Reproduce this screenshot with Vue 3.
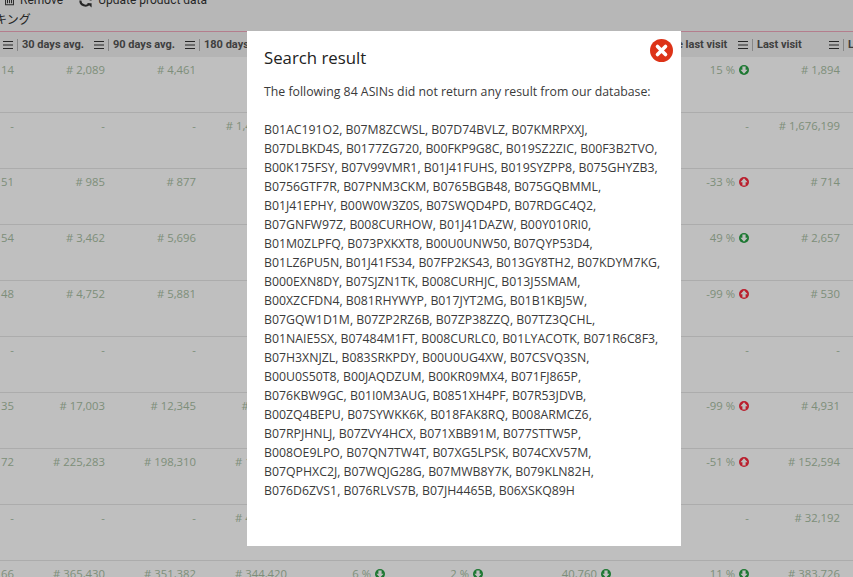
<template>
  <div class="page">
    <div class="toolbar">
      <div class="actions">
        <span class="action">
          <svg class="tool-icon" viewBox="0 0 14 14"><path d="M2 1h10v12H2zM4.500 3v8M7 3v8M9.500 3v8" fill="none" stroke="#333" stroke-width="1.300" /></svg>
          Remove
        </span>
        <span class="action refresh">
          <svg class="tool-icon wide" viewBox="0 0 16 16"><path d="M2.500 8a5.500 5.500 0 0 0 9.800 3.400M13.500 8A5.500 5.500 0 0 0 3.700 4.600" fill="none" stroke="#333" stroke-width="2.200" /><path d="M9.500 11h5v4.500zM6.500 5h-5V.5z" fill="#333" /></svg>
          Update product data
        </span>
      </div>
      <div class="tab">ランキング</div>
    </div>

    <div class="table">
      <div class="row head">
        <div v-for="(title, i) in columns" :key="i" class="head-cell">
          <span class="head-title">{{ title }}</span>
          <svg class="menu" viewBox="0 0 10 8"><path d="M0 .5h10M0 4h10M0 7.500h10" stroke="#333" stroke-width="1" /></svg>
          <span class="sep"></span>
        </div>
      </div>
      <div v-for="(row, i) in rows" :key="i" class="row body">
        <div v-for="(cell, j) in row" :key="j" class="cell">
          <template v-if="typeof cell === 'string'">{{ cell }}</template>
          <template v-else>
            {{ cell.t }}
            <svg class="trend" viewBox="0 0 10 10">
              <circle cx="5" cy="5" r="5" :fill="cell.up ? '#f8283c' : '#27a043'" />
              <path v-if="cell.up" d="M5 1.300 8.600 5.200H6.600V8.400H3.400V5.200H1.400z" fill="#fff" />
              <path v-else d="M5 8.700 1.400 4.800H3.400V1.600H6.600V4.800H8.600z" fill="#fff" />
            </svg>
          </template>
        </div>
      </div>
    </div>

    <div class="backdrop"></div>

    <div class="modal">
      <h2 class="title">Search result</h2>
      <svg class="close" viewBox="0 0 23 23">
        <circle cx="11.500" cy="11.500" r="11.500" fill="#dd3318" />
        <path d="M7.500 7.500l8 8M15.500 7.500l-8 8" stroke="#fff" stroke-width="3.600" stroke-linecap="round" />
      </svg>
      <p class="intro">The following 84 ASINs did not return any result from our database:</p>
      <div class="asins">
        <div v-for="line in asinLines" :key="line">{{ line }}</div>
      </div>
    </div>
  </div>
</template>

<script setup>
// middle columns sit behind the modal, only what shows round it is filled in
const columns = ['', '30 days avg.', '90 days avg.', '180 days avg.', '', '', '', 'Rank change last visit', 'Last visit', 'Last update']

const up = (t) => ({ t, up: true })
const down = (t) => ({ t, up: false })

const rows = [
  ['14', '# 2,089', '# 4,461', '', '', '', '', down('15 %'), '# 1,894'],
  ['-', '-', '-', '# 1,456,789', '', '', '', '-', '# 1,676,199'],
  ['51', '# 985', '# 877', '', '', '', '', up('-33 %'), '# 714'],
  ['54', '# 3,462', '# 5,696', '', '', '', '', down('49 %'), '# 2,657'],
  ['48', '# 4,752', '# 5,881', '', '', '', '', up('-99 %'), '# 530'],
  ['-', '-', '-', '', '', '', '', '-', '-'],
  ['35', '# 17,003', '# 12,345', '# 13,210', '', '', '', up('-99 %'), '# 4,931'],
  ['72', '# 225,283', '# 198,310', '# 172,310', '', '', '', up('-51 %'), '# 152,594'],
  ['-', '-', '-', '# 412,208', '', '', '', '-', '# 32,192'],
  ['66', '# 365,430', '# 351,382', '# 344,420', down('6 %'), down('2 %'), down('40,760'), down('11 %'), '# 383,726'],
]

const asinLines = [
  'B01AC191O2, B07M8ZCWSL, B07D74BVLZ, B07KMRPXXJ,',
  'B07DLBKD4S, B0177ZG720, B00FKP9G8C, B019SZ2ZIC, B00F3B2TVO,',
  'B00K175FSY, B07V99VMR1, B01J41FUHS, B019SYZPP8, B075GHYZB3,',
  'B0756GTF7R, B07PNM3CKM, B0765BGB48, B075GQBMML,',
  'B01J41EPHY, B00W0W3Z0S, B07SWQD4PD, B07RDGC4Q2,',
  'B07GNFW97Z, B008CURHOW, B01J41DAZW, B00Y010RI0,',
  'B01M0ZLPFQ, B073PXKXT8, B00U0UNW50, B07QYP53D4,',
  'B01LZ6PU5N, B01J41FS34, B07FP2KS43, B013GY8TH2, B07KDYM7KG,',
  'B000EXN8DY, B07SJZN1TK, B008CURHJC, B013J5SMAM,',
  'B00XZCFDN4, B081RHYWYP, B017JYT2MG, B01B1KBJ5W,',
  'B07GQW1D1M, B07ZP2RZ6B, B07ZP38ZZQ, B07TZ3QCHL,',
  'B01NAIE5SX, B07484M1FT, B008CURLC0, B01LYACOTK, B071R6C8F3,',
  'B07H3XNJZL, B083SRKPDY, B00U0UG4XW, B07CSVQ3SN,',
  'B00U0S50T8, B00JAQDZUM, B00KR09MX4, B071FJ865P,',
  'B076KBW9GC, B01I0M3AUG, B0851XH4PF, B07R53JDVB,',
  'B00ZQ4BEPU, B07SYWKK6K, B018FAK8RQ, B008ARMCZ6,',
  'B07RPJHNLJ, B07ZVY4HCX, B071XBB91M, B077STTW5P,',
  'B008OE9LPO, B07QN7TW4T, B07XG5LPSK, B074CXV57M,',
  'B07QPHXC2J, B07WQJG28G, B07MWB8Y7K, B079KLN82H,',
  'B076D6ZVS1, B076RLVS7B, B07JH4465B, B06XSKQ89H',
]
</script>

<style>
html, body {
  margin: 0;
  height: 100%;
  overflow: hidden;
  background: #fff;
}
</style>

<style scoped>
.page {
  position: relative;
  width: 853px;
  height: 577px;
  overflow: hidden;
  font-family: "Open Sans", "Noto Sans", sans-serif;
}

/* toolbar is scrolled partly off the top */
.toolbar {
  height: 31px;
  overflow: hidden;
  background: #f5f5f5;
  border-bottom: 1px solid #f0a8bc;
  color: #333;
}
.actions {
  display: flex;
  align-items: center;
  height: 20px;
  margin-top: -10px;
  padding-left: 4px;
  font-family: Roboto, sans-serif;
  font-size: 12px;
}
.action {
  display: flex;
  align-items: center;
  gap: 5px;
}
.refresh {
  margin-left: 15px;
}
.tool-icon {
  width: 11px;
  height: 14px;
}
.tool-icon.wide {
  width: 15px;
  height: 15px;
}
.tab {
  margin-left: -29px;
  font-family: "Noto Sans CJK JP", sans-serif;
  font-size: 12px;
  line-height: 18px;
  white-space: nowrap;
}

.table {
  width: 1100px;
  margin-left: -73px;
}
.row {
  display: grid;
  grid-template-columns: 91px 91px 91px 91px 98px 98px 128px 138px 91px 91px;
}
.head {
  height: 25px;
  background: #f0f0f0;
}
.head-cell {
  display: flex;
  align-items: center;
  padding-left: 4px;
  min-width: 0;
}
.head-title {
  flex: 1;
  min-width: 0;
  overflow: hidden;
  white-space: nowrap;
  font-family: Roboto, sans-serif;
  font-size: 11px;
  font-weight: 700;
  color: #555;
}
.menu {
  flex: none;
  width: 10px;
  height: 8px;
  margin: 0 4px 0 3px;
}
.sep {
  flex: none;
  width: 1px;
  height: 12px;
  background: #b5b5b5;
}
.body {
  height: 56px;
  box-sizing: border-box;
  background: #fff;
  border-bottom: 1px solid #e6e6e6;
}
.cell {
  display: flex;
  justify-content: flex-end;
  gap: 4px;
  padding: 5px 4px 0 0;
  font-size: 11.300px;
  line-height: 16px;
  color: #a8bea3;
  white-space: nowrap;
}
.trend {
  flex: none;
  width: 10px;
  height: 10px;
  margin-top: 3px;
}

.backdrop {
  position: absolute;
  inset: 0;
  background: rgba(0, 0, 0, 0.25);
}
.modal {
  position: absolute;
  left: 247px;
  top: 31px;
  width: 434px;
  height: 515px;
  box-sizing: border-box;
  padding: 16px 17px;
  background: #fff;
  color: #3a3a3a;
  font-size: 12.300px;
}
.title {
  margin: 0;
  font-size: 16.800px;
  font-weight: 400;
  line-height: 22px;
  color: #222;
}
.close {
  position: absolute;
  top: 8px;
  right: 8px;
  width: 23px;
  height: 23px;
}
.intro {
  margin: 13px 0 0;
  line-height: 19px;
}
.asins {
  margin-top: 19px;
  line-height: 19px;
  white-space: nowrap;
}
</style>
